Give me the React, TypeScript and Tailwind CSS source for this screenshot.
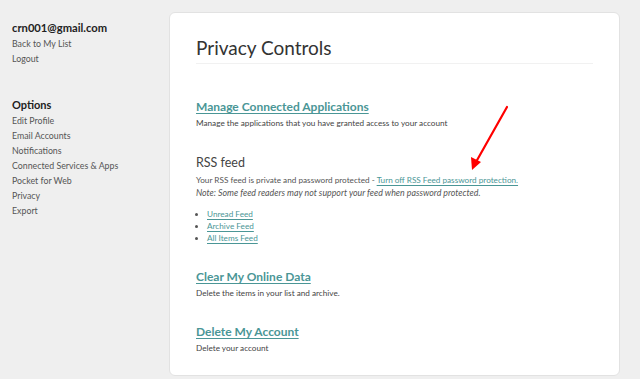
import React from 'react';

const linkCls = 'text-[#4a9696] underline underline-offset-2 decoration-1';

const SideLink: React.FC<{ label: string }> = ({ label }) => (
  <div className="h-[15px] leading-[15px] text-[8.8px] text-[#555]">{label}</div>
);

const Section: React.FC<{ title: string; desc: string }> = ({ title, desc }) => (
  <div>
    <div className={`text-[12px] font-bold leading-[16px] ${linkCls}`}>{title}</div>
    <p className="mt-[2px] text-[8.2px] leading-[12px] text-[#444]">{desc}</p>
  </div>
);

export default function App() {
  return (
    <div
      className="relative flex w-[640px] h-[379px] overflow-hidden bg-[#efefef]"
      style={{ fontFamily: 'Lato, "Open Sans", sans-serif' }}
    >
      {/* sidebar */}
      <aside className="w-[169px] shrink-0 pl-[12px] pt-[20px]">
        <div className="text-[11.2px] font-bold leading-[15px] text-[#222]">crn001@gmail.com</div>
        <div className="mt-[1px]">
          <SideLink label="Back to My List" />
          <SideLink label="Logout" />
        </div>
        <div className="mt-[31px] text-[11px] font-bold leading-[15px] text-[#222]">Options</div>
        <div className="mt-[1px]">
          {['Edit Profile', 'Email Accounts', 'Notifications', 'Connected Services & Apps', 'Pocket for Web', 'Privacy', 'Export'].map(l => (
            <SideLink key={l} label={l} />
          ))}
        </div>
      </aside>

      {/* main card */}
      <main className="mt-[12px] h-[364px] w-[451px] shrink-0 rounded-[6px] border border-[#e2e2e2] bg-white px-[26px] pt-[23px]">
        <h1 className="text-[19px] leading-[24px] text-[#333]">Privacy Controls</h1>
        <div className="mt-[3px] h-px bg-[#f1f1f1]" />

        <div className="mt-[35px]">
          <Section title="Manage Connected Applications" desc="Manage the applications that you have granted access to your account" />
        </div>

        <div className="mt-[26px]">
          <div className="text-[12.5px] leading-[16px] text-[#444]">RSS feed</div>
          <p className="mt-[3px] text-[8.2px] leading-[12px] text-[#555]">
            Your RSS feed is private and password protected - <span className={linkCls}>Turn off RSS Feed password protection.</span>
          </p>
          <p className="mt-[1px] text-[8.8px] italic leading-[12px] text-[#555]">
            Note: Some feed readers may not support your feed when password protected.
          </p>
          <ul className="mt-[9px] list-disc pl-[11px] text-[8.2px] leading-[12px] text-[#555] marker:text-[#555]">
            <li><span className={linkCls}>Unread Feed</span></li>
            <li><span className={linkCls}>Archive Feed</span></li>
            <li><span className={linkCls}>All Items Feed</span></li>
          </ul>
        </div>

        <div className="mt-[25px]">
          <Section title="Clear My Online Data" desc="Delete the items in your list and archive." />
        </div>
        <div className="mt-[25px]">
          <Section title="Delete My Account" desc="Delete your account" />
        </div>
      </main>

      {/* red annotation arrow */}
      <svg className="pointer-events-none absolute left-0 top-0" width="640" height="379">
        <line x1="507" y1="107" x2="476" y2="162" stroke="#ff0000" strokeWidth="2.2" strokeLinecap="round" />
        <polygon points="472,170 471,157 481,162" fill="#ff0000" />
      </svg>
    </div>
  );
}
